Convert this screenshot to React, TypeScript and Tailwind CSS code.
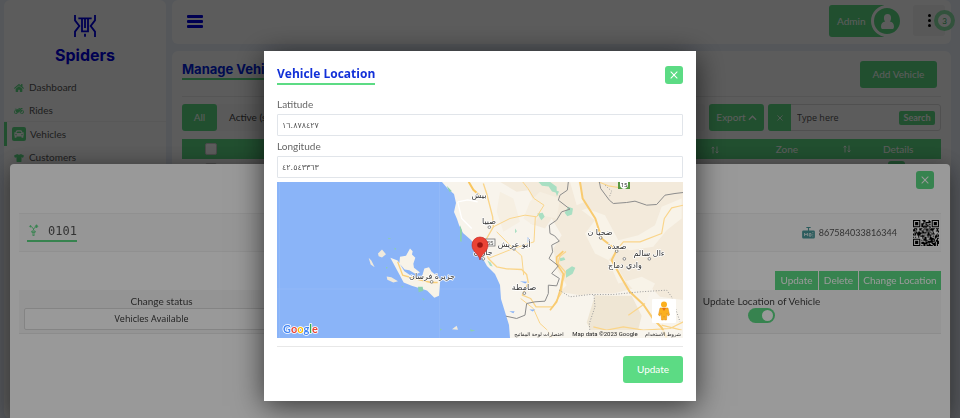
import React from "react";
import { FaHome, FaMotorcycle, FaCar, FaTshirt } from "react-icons/fa";

const menu = [
  { label: "Dashboard", Icon: FaHome },
  { label: "Rides", Icon: FaMotorcycle },
  { label: "Vehicles", Icon: FaCar, active: true },
  { label: "Customers", Icon: FaTshirt },
];

function CloseIcon({ className }: { className: string }) {
  return (
    <svg viewBox="0 0 10 10" className={className} fill="none" stroke="currentColor" strokeWidth="1.3" strokeLinecap="round">
      <path d="M1.2 1.2 8.8 8.8M8.8 1.2 1.2 8.8" />
    </svg>
  );
}

function SortIcon() {
  return (
    <svg viewBox="0 0 8 8" className="inline size-2" fill="none" stroke="currentColor" strokeWidth="0.9">
      <path d="M2 7.5V1M.6 2.4 2 .9l1.4 1.5M6 .5V7M4.6 5.6 6 7.1l1.4-1.5" />
    </svg>
  );
}

function PersonIcon({ className }: { className: string }) {
  return (
    <svg viewBox="0 0 40 46" className={className} fill="currentColor">
      <path d="M20 0c7 0 11 5 11 12 0 5-2 9-4 11 8 2 13 6 13 15 0 5-2 8-6 8H6c-4 0-6-3-6-8 0-9 5-13 13-15-2-2-4-6-4-11C9 5 13 0 20 0z" />
    </svg>
  );
}

function Logo() {
  return (
    <svg viewBox="0 0 66 66" className="h-[22px] w-[22px]" fill="none" stroke="#0000e0" strokeWidth="5.500">
      <path d="M3 0v16l13 17L3 50v16M63 0v16L50 33l13 17v16" />
      <path d="M13 10h11v39h18V10h11M33 9v30M24 10h18M33 56v9" />
    </svg>
  );
}

function Sidebar() {
  return (
    <aside className="flex w-[162px] shrink-0 flex-col rounded-md bg-white pt-[15px]">
      <div className="flex flex-col items-center pb-[10px]">
        <Logo />
        <span className="mt-[7px] font-[Inter,sans-serif] text-[16px] leading-[22px] font-bold text-[#0000e0]">Spiders</span>
      </div>
      <nav>
        <ul className="text-[10px] text-[#555]">
          {menu.map(({ label, Icon, active }) => (
            <li key={label}>
              {active ? (
                <a href="#vehicles" className="flex h-[24px] items-center gap-[4px] border-l-[3px] border-[#5cdb84] pl-[5px] shadow-[0_-1px_0_#f3f3f3]">
                  <span className="flex size-[14px] items-center justify-center rounded-[2px] bg-[#5cdb84] text-white">
                    <Icon className="size-[10px]" />
                  </span>
                  {label}
                </a>
              ) : (
                <a href="#menu" className="flex h-[23px] items-center gap-[5px] pl-[10px]">
                  <Icon className="size-[10px] text-[#5cdb84]" />
                  {label}
                </a>
              )}
            </li>
          ))}
        </ul>
      </nav>
    </aside>
  );
}

function TopBar() {
  return (
    <header className="flex h-[44px] items-start justify-between rounded-md bg-white pt-[5px] pr-[6px] pl-[15px]">
      <button aria-label="Toggle menu" className="mt-[10px] flex w-4 flex-col gap-[2px]">
        <span className="h-[3px] w-full rounded-[1px] bg-[#0000e0]" />
        <span className="h-[3px] w-full rounded-[1px] bg-[#0000e0]" />
        <span className="h-[3px] w-full rounded-[1px] bg-[#0000e0]" />
      </button>
      <div className="flex gap-[10px]">
        <button className="flex h-8 w-[74px] items-center justify-between rounded-l-[3px] bg-linear-to-r from-[#5cdb84] from-75% to-white to-75% pl-[8px] text-[10px] text-white">
          Admin
          <span className="flex size-8 shrink-0 items-center justify-center rounded-full border-[3px] border-white bg-[#5cdb84]">
            <PersonIcon className="h-[15px] w-[13px]" />
          </span>
        </button>
        <button aria-label="Notifications" className="relative flex h-[31px] w-8 flex-col items-center justify-center gap-[2px] rounded-[3px] bg-[#f3f3f3]">
          <span className="size-[3px] rounded-full bg-black" />
          <span className="size-[3px] rounded-full bg-black" />
          <span className="size-[3px] rounded-full bg-black" />
          <span className="absolute top-[5px] -right-[10px] flex size-[21px] items-center justify-center rounded-full border-[4px] border-[#8be3a6] bg-white text-[8px] text-[#30b35c]">3</span>
        </button>
      </div>
    </header>
  );
}

function Content() {
  return (
    <main className="flex-1 rounded-md bg-white px-[10px] pt-[10px]">
      <div className="flex items-start justify-between border-b border-[#ebebeb] pr-[4px] pb-[8px]">
        <h1 className="border-b-2 border-[#5cdb84] font-[Inter,sans-serif] text-[13px] leading-[17px] font-bold text-[#0022dd]">Manage Vehicles</h1>
        <button className="h-[27px] w-[77px] rounded-[3px] bg-[#5cdb84] text-[10px] text-white">Add Vehicle</button>
      </div>
      <div className="mt-[7px] flex h-[27px] gap-[4px]">
        <div className="flex flex-1 items-center gap-[12px] rounded-[3px] bg-[#f9f9f9] text-[10px] text-[#444]">
          <button className="h-full w-[35px] rounded-[3px] bg-[#5cdb84] text-white">All</button>
          <button>Active (shift)</button>
        </div>
        <button className="flex w-[55px] items-center justify-center gap-[2px] rounded-[3px] bg-[#5cdb84] text-[10px] text-white">
          Export
          <svg viewBox="0 0 10 6" className="h-[6px] w-[9px]" fill="none" stroke="currentColor" strokeWidth="1.4"><path d="M1 5 5 1l4 4" /></svg>
        </button>
        <div className="flex w-[173px] items-center rounded-[3px] border border-[#ddd] pr-[5px]">
          <button aria-label="Clear search" className="-my-px -ml-px flex h-[27px] w-[23px] shrink-0 items-center justify-center rounded-l-[3px] bg-[#5cdb84] text-white">
            <CloseIcon className="size-[6px]" />
          </button>
          <input aria-label="Search vehicles" placeholder="Type here" className="w-0 flex-1 px-[6px] font-['Open_Sans',sans-serif] text-[9px] placeholder:text-[#555]" />
          <button className="h-[14px] w-[36px] rounded-[2px] bg-[#5cdb84] text-[9px] leading-[14px] font-bold text-white">Search</button>
        </div>
      </div>
      <table className="mt-[8px] w-full table-fixed text-[10px] text-white">
        <thead className="bg-[#5cdb84]">
          <tr className="h-5">
            <th className="w-[58px]"><input type="checkbox" aria-label="Select all" className="mx-auto block size-[12px] appearance-none rounded-[2px] border border-[#ccc] bg-white" /></th>
            <th className="text-right font-normal"><SortIcon /></th>
            <th className="w-[124px] pl-[12px] font-normal">Zone</th>
            <th className="w-[98px] text-left font-normal">
              <span className="flex items-center gap-[32px]"><SortIcon />Details</span>
            </th>
          </tr>
        </thead>
        <tbody>
          <tr>
            <td className="pt-[4px]"><input type="checkbox" aria-label="Select vehicle" className="mx-auto block size-[12px] appearance-none rounded-[2px] border border-[#ccc] bg-white" /></td>
            <td />
            <td />
            <td className="pt-[2px] pl-[45px]"><button aria-label="Open details" className="block h-[14px] w-[17px] rounded-[3px] bg-[#5cdb84]" /></td>
          </tr>
        </tbody>
      </table>
    </main>
  );
}

const QR_SIZE = 25;
function inFinder(x: number, y: number) {
  const cx = x > 12 ? QR_SIZE - 1 - x : x;
  const cy = y > 12 ? QR_SIZE - 1 - y : y;
  if (cx > 7 || cy > 7 || (x > 12 && y > 12)) return null;
  const d = Math.max(Math.abs(cx - 3), Math.abs(cy - 3));
  return d <= 1 || d === 3;
}
function QrCode() {
  let d = "";
  let seed = 11;
  for (let y = 0; y < QR_SIZE; y++) {
    for (let x = 0; x < QR_SIZE; x++) {
      seed = (seed * 1103 + 12345) % 65521;
      const finder = inFinder(x, y);
      const on = finder === null ? seed % 100 < 52 : finder;
      if (on) d += `M${x} ${y}h1v1h-1z`;
    }
  }
  return (
    <svg viewBox="-1 -1 27 27" className="size-[28px] bg-white" role="img" aria-label="Vehicle QR code">
      <path d={d} />
    </svg>
  );
}

function VehicleSheet() {
  return (
    <section aria-label="Vehicle 0101" className="mx-[10px] mt-[164px] flex-1 rounded-t-[4px] bg-white px-[9px] pt-[7px] shadow-[0_4px_24px_rgba(0,0,0,0.5)]">
      <div className="flex justify-end pr-[7px]">
        <button aria-label="Close vehicle" className="flex size-[18px] items-center justify-center rounded-[3px] bg-[#5cdb84] text-white">
          <CloseIcon className="size-2" />
        </button>
      </div>
      <div className="mt-[24px] flex h-[39px] items-center justify-between border-y border-[#f0f0f0] bg-[#fafafa] pr-[1px] pl-[8px]">
        <div className="flex h-[18px] items-start gap-[9px] border-b-2 border-[#5cdb84]">
          <svg viewBox="0 0 30 36" className="ml-[1px] h-[12px] w-[11px]" fill="#5cdb84" stroke="#5cdb84" strokeWidth="3">
            <path d="m24 2 4 5-4 5-4-5zM6 4l3 3-3 3-3-3z" strokeWidth="2" />
            <path d="m9 9 6 5 6-4M15 14v4M10 21h10v4H10zM11 30h8M12 34h6" fill="none" />
          </svg>
          <span className="font-['DejaVu_Sans_Mono',monospace] text-[12px] leading-[14px] text-[#555]">0101</span>
        </div>
        <div className="flex items-center text-[10px] text-[#555]">
          <svg viewBox="0 0 36 36" className="mr-[4px] size-[13px]" fill="none" stroke="#4a9a9c" strokeWidth="3">
            <path d="M18 14V5M12 4h12" />
            <rect x="2" y="14" width="32" height="19" rx="2" fill="#4a9a9c" />
            <path d="M7 28v-8l4 5 4-5v8M20 21h5v7h-5zM30 17v3M30 23v3M30 29v2" stroke="white" strokeWidth="2" />
          </svg>
          <span className="mr-[15px] text-[9px]">867584033816344</span>
          <QrCode />
        </div>
      </div>
      <div className="mt-[19px] flex justify-end gap-px text-[10px] leading-[19px] text-white">
        <button className="w-[43px] bg-[#5cdb84]">Update</button>
        <button className="w-[39px] bg-[#5cdb84]">Delete</button>
        <button className="w-[82px] bg-[#5cdb84]">Change Location</button>
      </div>
      <div className="grid h-[44px] grid-cols-[275fr_325fr_275fr_37fr] border-b border-[#eaeaea] bg-[#f7f7f7] px-[5px] pt-[4px] text-center text-[10px] leading-[14px] text-[#444]">
        <div>
          <label htmlFor="status" className="block">Change status</label>
          <select id="status" className="block h-[22px] w-full appearance-none rounded-[2px] border border-[#dcdcdc] bg-white pr-[20px] text-center font-['Open_Sans',sans-serif] text-[9px] text-[#333] [text-align-last:center]">
            <option>Vehicles Available</option>
          </select>
        </div>
        <div />
        <div>
          <label htmlFor="live" className="block whitespace-nowrap">Update Location of Vehicle</label>
          <span className="relative mx-auto block h-[15px] w-[27px]">
            <input id="live" type="checkbox" defaultChecked className="block h-full w-full appearance-none rounded-full bg-[#5cdb84]" />
            <span className="pointer-events-none absolute top-[2px] right-[2px] size-[11px] rounded-full bg-white" />
          </span>
        </div>
      </div>
    </section>
  );
}

const places: [string, number, number][] = [
  ["بيش", 202, 16],
  ["صبيا", 212, 42],
  ["جازان", 206, 73],
  ["أبو عريش", 237, 65],
  ["ضحيا ن", 323, 53],
  ["صعدة", 340, 67],
  ["ءال سالم", 372, 74],
  ["وادي دماج", 348, 86],
  ["صامطة", 247, 108],
  ["جزيرة فرسان", 155, 97],
];

const towns: [number, number][] = [
  [28, 146], [10, 241], [102, 211], [362, 178], [410, 218], [508, 241], [433, 241], [133, 344],
];

function LocationMap() {
  return (
    <svg viewBox="0 0 406 156" className="mt-[4px] block w-full" role="img" aria-label="Map">
      <rect width="406" height="156" fill="#8ab4f8" />
      <path d="M2.500 0V156M162.500 0V156M0 107H233" stroke="#97bcf9" strokeWidth="0.6" />
      <path d="M165 0 171 7l6 5 2 9-2 9 3 7 2 6 4 8 8 7 6 8 5 9 5 9 8 8 5 11 1 14 4 13 4 13 1 13h173V0z" fill="#f8f4ec" />
      <g transform="translate(203 -3.500) scale(.33333)">
        <path d="m60 10 50 30 35-5 30 60-25 40 45 15 20-30 30 50-25 40 10 60 30 50-20 20 60 10 40-5 60 0 60-15 50-5 30 30 70 10V10z" fill="#f3eadb" />
        <path d="m320 90 55 20 40 75 60-15 50-30 20-55 60-25v60l-45 35-40 50-70 10-30-10-35 40 30 70 70-20 40 20-30 60-60-70-30-50-60-30-30-60 30-40-40-30zM270 10l25 0 20 60-25 10z" fill="#f8f3e8" />
        <path d="m345 350 60 2 50 0 30 60-10 40-60 20-80-10-15-30z" fill="#efe6d4" />
        <path d="m180 40 60 20-10 60-50-10-20 30-30-20 20-50zM60 40l40 20 20 70-50 30-20-60z" fill="#f6efe2" />
        <g fill="#a9dfc3">
          <path d="m175 10 35 0 20 15 0 18-14-4-10-15-20-2zM265 85l14 5-3 18-14 5-8-10zM258 275l18-12 10 5-8 18-20 12zM236 240l16-4 4 8-14 4zM172 105l16-2 6 12-10 10zM105 150l6 8-6 6z" />
          <path d="m22 246 10 6 6 12-8-2zM225 35l12 4-6 14z" />
        </g>
        <g fill="none" stroke="#fad58a" strokeWidth="4" strokeLinejoin="round">
          <path d="m10 15 10 30 18 70 2 30-20 35-5 30 10 30 25 25 30 6 45 2 15 15 5 25-18 37 25 10 16 25 50 0 25-40 5-35 8-30-22-25 6-22 18-14" />
          <path d="m122 360 38 30 20 45 20 18 20 30M40 145l50-25 45-10 35 5 22-35-30-20-18-30-20-25M50 160l50 50-75 30M100 210l62-20 4-75M100 210l25 22 6 58" strokeWidth="3" />
          <path d="m355 10 30 12 50 8M410 215l20-25 50 0 65-25 8-45 22-32 35-8M340 445l40 10 50-10 60 10 80-5 40-20M495 375l-50 35M545 440l60 15" strokeWidth="3.500" />
        </g>
        <path d="m300 10 8 50 38 60 19 60 45 35-15 30 25 45 28 48 42 40 30 44 25 25 15 30" fill="none" stroke="#f9cb70" strokeWidth="6" strokeLinejoin="round" />
        <path d="m250 218-20 18 0 20 20 30-8 44-12 40-20 25" fill="none" stroke="#f9cb70" strokeWidth="5" />
        <path d="m265 10-3 25-22 15-5 15 35 27-25 8-15 25-22 15 2 25 14 7 14 16-23 12 3 20-11 20 28 22-20 23 23 15-8 22-25-2 0 25-10 23-30 2-25 5-5 35-25 10-32-7M358 10l4 20 26 35 12 10 40-3 25-4 35 12 30-2 25-28 30-5 25-3" fill="none" stroke="#8c8c8c" strokeWidth="3" strokeLinejoin="round" />
        <path d="m238 335 32 20 60-7 70 0 80-8 80-5 15 20 15 45 10 30M342 350l3 35-17 50 2 30M375 20l20 18-8 20" fill="none" stroke="#9a9a9a" strokeWidth="3" strokeDasharray="3 5" />
        <path d="m143 175 8 12-8 6zM120 308l22 2-6 5zM148 393l18 0-8 6zM88 398l16 0-4 6z" fill="#8ab4f8" />
        {towns.map(([x, y]) => (
          <circle key={`${x}-${y}`} cx={x} cy={y} r="4" fill="white" stroke="#777" strokeWidth="2.500" />
        ))}
      </g>
      <g transform="translate(-1 -3.500) scale(.33333)">
        <path d="m372 235 18-3 12-22 8 8-2 10 10 10-6 18 2 12 18 14-12 5-20-12-14-2-16-18zM343 238l22 8 20 32 22 15 30 5 8-28 14-4 8 14 18 14 8 8-4 50-14 6-22-22-46-14-24-10-14-26z" fill="#f8f3e8" />
        <path d="m306 225 12-12 12 14-12 10-10-4zM278 238l8 8 10 20-12-8zM332 294l14 2 20 12-14 4-18-8zM528 452l14-10 4 12z" fill="#efe9dc" />
        <path d="m365 250 15 40 35 10 50 12 20 0" fill="none" stroke="#fad07a" strokeWidth="4" />
        <path d="m552 140 6 15-1 35-5-2zM512 22l16 16-8 2zM426 325l14 0 2 12-14 4zM438 358l9 4-5 4zM336 178l10 3-8 1zM355 208l6 2-4 5zM330 265l6 3-6 3zM492 450l6 4-6 2zM582 452l16 5-14 2zM376 322l7 3-5 2z" fill="#8bcfae" />
        <path d="m578 10 14 24 20 18" fill="none" stroke="#f9c65e" strokeWidth="6" />
        <path d="m545 70 30-6 30 6M545 70l12 50 30 30" fill="none" stroke="#fff" strokeWidth="4" />
        <circle cx="467" cy="310" r="4" fill="white" stroke="#777" strokeWidth="2.500" />
      </g>
      <g>
        <rect x="208" y="57" width="10" height="7" fill="#f6f6f4" stroke="#777" strokeWidth="0.8" />
        <text x="213" y="63" textAnchor="middle" className="font-[Roboto,sans-serif] text-[6px]" fill="#555">55</text>
        <path d="M341 0h12v7h-12z" fill="#5a9a42" />
        <path d="M343 0h8v3q0 3-4 4-4-1-4-4z" fill="white" />
        <text x="347" y="5" textAnchor="middle" className="font-[Roboto,sans-serif] text-[6px]" fill="#333">15</text>
      </g>
      <g className="font-['DejaVu_Sans',sans-serif] text-[8px]" fill="#333" stroke="white" strokeWidth="1.5" strokeLinejoin="round" paintOrder="stroke" textAnchor="middle">
        {places.map(([name, x, y]) => (
          <text key={name} x={x} y={y}>{name}</text>
        ))}
      </g>
      <path d="M203 78c-1-6-8-8-8-15a8 8 0 0 1 16 0c0 7-7 9-8 15z" fill="#ea4335" stroke="#c5221f" strokeWidth="0.6" />
      <circle cx="203" cy="63" r="2.800" fill="#9b1512" />
      <rect x="233" y="148" width="173" height="8" fill="#f8f5ef" fillOpacity="0.75" />
      <g fill="#222" textAnchor="middle">
        <text x="262" y="154" className="font-['DejaVu_Sans',sans-serif] text-[5px]">اختصارات لوحة المفاتيح</text>
        <text x="328" y="154" className="font-[Roboto,sans-serif] text-[6px]">Map data ©2023 Google</text>
        <text x="386" y="154" className="font-['DejaVu_Sans',sans-serif] text-[5px]">شروط الاستخدام</text>
      </g>
      <g className="font-[Lato,sans-serif] text-[11px] font-bold">
        <text x="6" y="151" stroke="white" strokeWidth="1.6" paintOrder="stroke" strokeLinejoin="round">
          <tspan fill="#4285f4">G</tspan><tspan fill="#ea4335">o</tspan><tspan fill="#fbbc05">o</tspan><tspan fill="#4285f4">g</tspan><tspan fill="#34a853">l</tspan><tspan fill="#ea4335">e</tspan>
        </text>
      </g>
      <rect x="375" y="117" width="24" height="24" rx="1" fill="white" />
      <g fill="#fbb01f">
        <circle cx="387" cy="122.500" r="3" />
        <path d="M383 126h8l1.500 7-1.500 1-1-3-.5 7h-2l-.5-4-.5 4h-2l-.5-7-1 3-1.500-1z" stroke="#e08a10" strokeWidth="0.5" />
        <path d="m385 126 2 3 2-3z" fill="#e8711a" />
      </g>
    </svg>
  );
}

const field =
  "block h-[22px] w-full rounded-[1px] border border-[#e1e5ea] bg-white px-[4px] font-['DejaVu_Sans',sans-serif] text-[8px] text-[#555]";

function LocationDialog() {
  return (
    <section role="dialog" aria-labelledby="dialog-title" className="mt-[51px] w-[45%] bg-white px-[13px] pt-[14px] pb-[18px] shadow-[0_5px_28px_rgba(0,0,0,0.65)]">
      <div className="flex items-start justify-between">
        <h2 id="dialog-title" className="border-b-2 border-[#5cdb84] font-['Open_Sans',sans-serif] text-[12px] leading-[18px] font-bold text-[#1230d8]">Vehicle Location</h2>
        <button aria-label="Close" className="mt-px flex size-[18px] items-center justify-center rounded-[3px] bg-[#5cdb84] text-white">
          <CloseIcon className="size-2" />
        </button>
      </div>
      <form onSubmit={(e) => e.preventDefault()} className="text-[10px] text-[#666]">
        <label htmlFor="lat" className="mt-[12px] mb-[3px] block leading-[14px]">Latitude</label>
        <input id="lat" defaultValue="١٦.٨٧٨٤٢٧" className={field} />
        <label htmlFor="lng" className="mt-[3px] mb-[3px] block leading-[14px]">Longitude</label>
        <input id="lng" defaultValue="٤٢.٥٤٣٣٦٣" className={field} />
        <LocationMap />
        <div className="mt-[8px] flex justify-end border-t border-[#e8e8e8] pt-[9px]">
          <button className="h-[27px] w-[60px] rounded-[3px] bg-[#5cdb84] text-[10px] text-white">Update</button>
        </div>
      </form>
    </section>
  );
}

export default function App() {
  return (
    <div className="h-screen overflow-hidden bg-[#eaf0fa] font-[Lato,sans-serif]">
      <div className="flex min-h-screen gap-[6px] pr-[9px] pl-[4px]">
        <Sidebar />
        <div className="flex min-w-0 flex-1 flex-col gap-[7px]">
          <TopBar />
          <Content />
        </div>
      </div>
      <div className="fixed inset-0 flex bg-black/40">
        <VehicleSheet />
      </div>
      <div className="fixed inset-0 flex items-start justify-center bg-black/40">
        <LocationDialog />
      </div>
    </div>
  );
}
